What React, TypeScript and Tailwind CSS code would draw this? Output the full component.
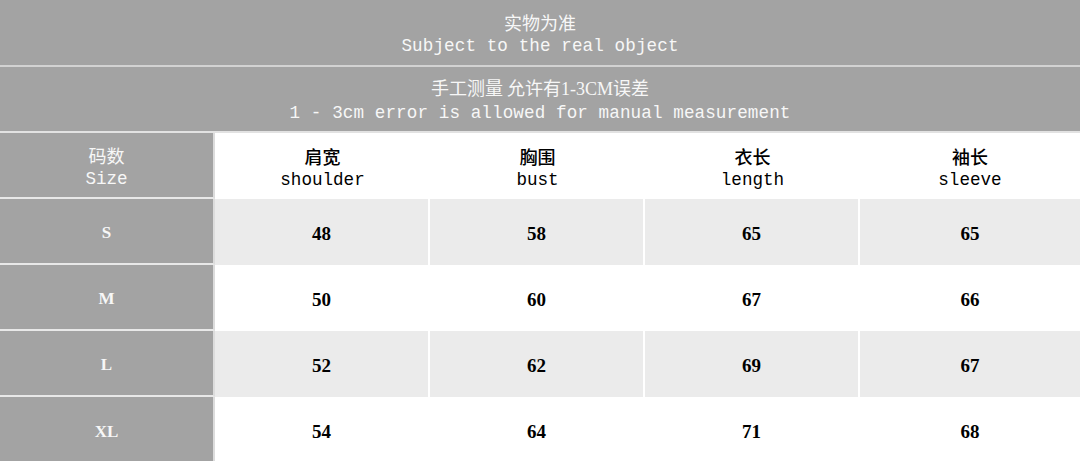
import React from "react";

const mono = "font-['Liberation_Mono','Noto_Sans_CJK_SC',monospace]";
const cjk = "font-['Noto_Sans_CJK_SC',sans-serif]";
const num = "font-['Liberation_Serif','Noto_Sans_CJK_SC',serif]";

const headers = [
  { zh: "肩宽", en: "shoulder" },
  { zh: "胸围", en: "bust" },
  { zh: "衣长", en: "length" },
  { zh: "袖长", en: "sleeve" },
];

const rows = [
  { size: "S", vals: ["48", "58", "65", "65"], bg: "bg-[#ebebeb]" },
  { size: "M", vals: ["50", "60", "67", "66"], bg: "bg-white" },
  { size: "L", vals: ["52", "62", "69", "67"], bg: "bg-[#ebebeb]" },
  { size: "XL", vals: ["54", "64", "71", "68"], bg: "bg-white" },
];

export default function App() {
  return (
    <div className="w-[1080px] h-[461px] overflow-hidden bg-white">
      <div className="h-[67px] bg-[#a3a3a3] border-b-2 border-[#d2d2d2] flex flex-col items-center justify-center pt-[3px] text-[#f7f7f7]">
        <div className={`${cjk} text-[18px] leading-[24px]`}>实物为准</div>
        <div className={`${mono} text-[17.6px] leading-[25px] tracking-[0.1px]`}>Subject to the real object</div>
      </div>
      <div className="h-[66px] bg-[#a3a3a3] border-b-2 border-[#e2e2e2] flex flex-col items-center justify-center pt-[2px] text-[#f7f7f7]">
        <div className={`${cjk} text-[18px] leading-[24px]`}>
          手工测量 允许有<span className={num}>1-3CM</span>误差
        </div>
        <div className={`${mono} text-[17.6px] leading-[24px] tracking-[0.1px] whitespace-pre`}>1 - 3cm error is allowed for manual measurement</div>
      </div>
      <div className="grid grid-cols-[215px_215px_215px_215px_220px]">
        <div className="h-[66px] bg-[#a3a3a3] border-r-2 border-[#dcdcdc] border-b-2 border-b-[#e8e8e8] flex flex-col items-center justify-center pt-[3px] text-[#f7f7f7]">
          <div className={`${cjk} text-[18px] leading-[24px]`}>码数</div>
          <div className={`${mono} text-[17.6px] leading-[24px]`}>Size</div>
        </div>
        {headers.map((h) => (
          <div key={h.en} className="h-[66px] bg-white flex flex-col items-center justify-center pt-[3px] text-black">
            <div className={`${cjk} text-[18px] leading-[24px] font-medium`}>{h.zh}</div>
            <div className={`${mono} text-[17.6px] leading-[24px]`}>{h.en}</div>
          </div>
        ))}
        {rows.map((r, ri) => (
          <React.Fragment key={r.size}>
            <div className={`h-[66px] bg-[#a3a3a3] border-r-2 border-[#dcdcdc] ${ri < rows.length - 1 ? "border-b-2 border-b-[#e8e8e8]" : ""} flex items-center justify-center pt-[4px] text-[#f7f7f7] ${num} font-bold text-[17px]`}>
              {r.size}
            </div>
            {r.vals.map((v, vi) => (
              <div
                key={vi}
                className={`h-[66px] ${r.bg} ${vi < 3 ? "border-r-2 border-white" : ""} flex items-center justify-center pt-[4px] text-black ${num} font-bold text-[19px]`}
              >
                {v}
              </div>
            ))}
          </React.Fragment>
        ))}
      </div>
    </div>
  );
}
